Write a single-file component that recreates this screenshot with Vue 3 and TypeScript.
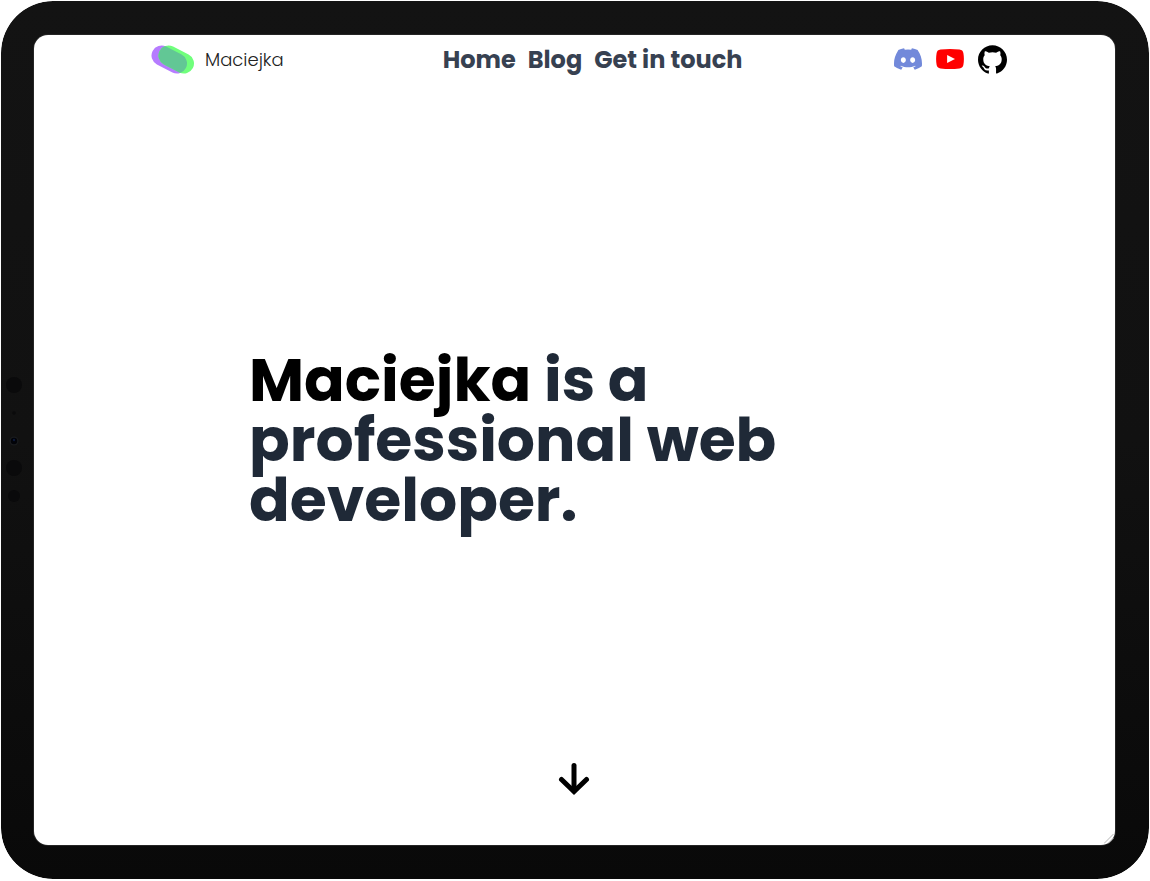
<script setup lang="ts">
interface NavLink {
  label: string
  href: string
}

const links: NavLink[] = [
  { label: 'Home', href: '#home' },
  { label: 'Blog', href: '#blog' },
  { label: 'Get in touch', href: '#contact' },
]
</script>

<template>
  <div class="tablet">
    <div class="sensors" aria-hidden="true">
      <svg width="20" height="130" viewBox="0 0 20 130">
        <circle cx="10" cy="10" r="8" fill="#0a0a0b" />
        <circle cx="10" cy="38" r="1.7" fill="#0a0a0b" />
        <circle cx="10" cy="66" r="4.5" fill="#191b1d" />
        <circle cx="10" cy="66" r="3.2" fill="#020308" />
        <circle cx="10" cy="65" r="1.2" fill="#0c1838" />
        <circle cx="10" cy="93" r="8" fill="#0a0a0b" />
        <circle cx="10" cy="121" r="6" fill="#0a0a0b" />
      </svg>
    </div>
    <div class="screen">
      <header class="topbar">
        <a class="brand" href="#home">
          <svg width="44" height="30" viewBox="0 -1 44 30" aria-hidden="true">
            <path d="M10.5 10.5 26 18.5" stroke="#b67cff" stroke-width="20" stroke-linecap="round" />
            <path d="M17.5 10.5 33 18.5" stroke="#70ff7c" stroke-width="20" stroke-linecap="round" />
            <clipPath id="purple-pill">
              <path d="M15.1 1.6 30.6 9.6A10 10 0 0 1 21.4 27.4L5.9 19.4A10 10 0 0 1 15.1 1.6Z" />
            </clipPath>
            <path clip-path="url(#purple-pill)" d="M17.5 10.5 33 18.5" stroke="#62c795" stroke-width="20" stroke-linecap="round" />
          </svg>
          <span>Maciejka</span>
        </a>
        <nav class="links">
          <a v-for="link in links" :key="link.href" :href="link.href">{{ link.label }}</a>
        </nav>
        <div class="social">
          <a href="#discord" aria-label="Discord">
            <svg width="28" height="28" viewBox="0 0 24 24" aria-hidden="true">
              <path fill="#7289da" d="M20.317 4.37a19.791 19.791 0 0 0-4.885-1.515.074.074 0 0 0-.079.037c-.21.375-.444.864-.608 1.25a18.27 18.27 0 0 0-5.487 0 12.64 12.64 0 0 0-.617-1.25.077.077 0 0 0-.079-.037A19.736 19.736 0 0 0 3.677 4.37a.07.07 0 0 0-.032.027C.533 9.046-.32 13.58.099 18.057a.082.082 0 0 0 .031.057 19.9 19.9 0 0 0 5.993 3.03.078.078 0 0 0 .084-.028 14.09 14.09 0 0 0 1.226-1.994.076.076 0 0 0-.041-.106 13.107 13.107 0 0 1-1.872-.892.077.077 0 0 1-.008-.128 10.2 10.2 0 0 0 .372-.292.074.074 0 0 1 .077-.01c3.928 1.793 8.18 1.793 12.062 0a.074.074 0 0 1 .078.01c.12.098.246.198.373.292a.077.077 0 0 1-.006.127 12.299 12.299 0 0 1-1.873.892.077.077 0 0 0-.041.107c.36.698.772 1.362 1.225 1.993a.076.076 0 0 0 .084.028 19.839 19.839 0 0 0 6.002-3.03.077.077 0 0 0 .032-.054c.5-5.177-.838-9.674-3.549-13.66a.061.061 0 0 0-.031-.03zM8.02 15.33c-1.183 0-2.157-1.085-2.157-2.419 0-1.333.956-2.419 2.157-2.419 1.21 0 2.176 1.096 2.157 2.42 0 1.333-.956 2.418-2.157 2.418zm7.975 0c-1.183 0-2.157-1.085-2.157-2.419 0-1.333.955-2.419 2.157-2.419 1.21 0 2.176 1.096 2.157 2.42 0 1.333-.946 2.418-2.157 2.418z" />
            </svg>
          </a>
          <a href="#youtube" aria-label="YouTube">
            <svg width="28" height="28" viewBox="0 0 28 28" aria-hidden="true">
              <path fill="#f00" d="M4.5 4.6Q14 3.6 23.5 4.6Q26.9 5 27.4 8.2Q28.4 14 27.4 19.8Q26.9 23 23.5 23.4Q14 24.4 4.5 23.4Q1.1 23 .6 19.8Q-.4 14 .6 8.2Q1.1 5 4.5 4.6Z" />
              <path fill="#fff" d="M11.1 9.9 19 14l-7.9 4.1Z" />
            </svg>
          </a>
          <a href="#github" aria-label="GitHub">
            <svg width="29" height="29" viewBox="0 0 24 24" aria-hidden="true">
              <path d="M12 .297c-6.63 0-12 5.373-12 12 0 5.303 3.438 9.8 8.205 11.385.6.113.82-.258.82-.577 0-.285-.01-1.04-.015-2.04-3.338.724-4.042-1.61-4.042-1.61C4.422 18.07 3.633 17.7 3.633 17.7c-1.087-.744.084-.729.084-.729 1.205.084 1.838 1.236 1.838 1.236 1.07 1.835 2.809 1.305 3.495.998.108-.776.417-1.305.76-1.605-2.665-.3-5.466-1.332-5.466-5.93 0-1.31.465-2.38 1.235-3.22-.135-.303-.54-1.523.105-3.176 0 0 1.005-.322 3.3 1.23.96-.267 1.98-.399 3-.405 1.02.006 2.04.138 3 .405 2.28-1.552 3.285-1.23 3.285-1.23.645 1.653.24 2.873.12 3.176.765.84 1.23 1.91 1.23 3.22 0 4.61-2.805 5.625-5.475 5.92.42.36.81 1.096.81 2.22 0 1.606-.015 2.896-.015 3.286 0 .315.21.69.825.57C20.565 22.092 24 17.592 24 12.297c0-6.627-5.373-12-12-12" />
            </svg>
          </a>
        </div>
      </header>
      <main class="hero">
        <h1><span class="name">Maciejka</span> is a professional web developer.</h1>
      </main>
      <footer class="more">
        <a href="#blog" aria-label="Scroll down">
          <svg width="32" height="32" viewBox="0 0 32 32" fill="none" stroke="#000" stroke-linecap="round" aria-hidden="true">
            <path d="M16 2.5V27" stroke-width="5" />
            <path d="M3.5 16.5 16 28.5 28.5 16.5" stroke-width="5" />
          </svg>
        </a>
      </footer>
      <svg class="corner" width="10" height="10" viewBox="0 0 10 10" fill="none" stroke="#b5b5b5" aria-hidden="true">
        <path d="M0 9.5 9.5 0M4 9.5 9.5 4" />
      </svg>
    </div>
  </div>
</template>

<style>
body {
  background: #fff;
}
</style>

<style scoped>
.tablet {
  position: relative;
  box-sizing: border-box;
  display: flex;
  height: 100vh;
  padding: 34px 34px 34px 33px;
  border: 1px solid #fff;
  border-bottom-width: 2px;
  border-radius: 53px;
  background: linear-gradient(#131313, #111 50%, #090909) padding-box;
  font-family: Poppins, Inter, "Open Sans", sans-serif;
}

.sensors {
  position: absolute;
  left: 3px;
  top: 374px;
}

.sensors svg,
.topbar svg,
.more svg {
  display: block;
}

.screen {
  position: relative;
  flex: 1;
  display: grid;
  grid-template-rows: 48px 1fr 48px;
  border-radius: 14px;
  background: #fff;
  box-shadow: 0 0 0 1px #252525;
}

.topbar {
  display: flex;
  align-items: center;
  justify-content: space-between;
  padding: 0 108px 0 117px;
}

a {
  color: inherit;
  text-decoration: none;
}

.brand {
  display: flex;
  align-items: center;
  gap: 10px;
  min-width: 140px;
  color: #222;
  font-size: 18px;
  font-weight: 300;
}

.links {
  display: flex;
  gap: 12px;
  color: #374151;
  font-size: 24px;
  font-weight: 700;
}

.social {
  display: flex;
  align-items: center;
  gap: 14px;
}

.hero {
  display: grid;
  align-items: center;
  padding: 0 215px;
}

h1 {
  margin: 0;
  color: #1f2937;
  font-size: 60px;
  font-weight: 700;
  line-height: 60px;
}

.name {
  color: #000;
}

.more {
  position: absolute;
  right: 2px;
  bottom: 50px;
  left: 0;
  display: flex;
  justify-content: center;
}

.corner {
  position: absolute;
  right: 1px;
  bottom: 1px;
}
</style>
